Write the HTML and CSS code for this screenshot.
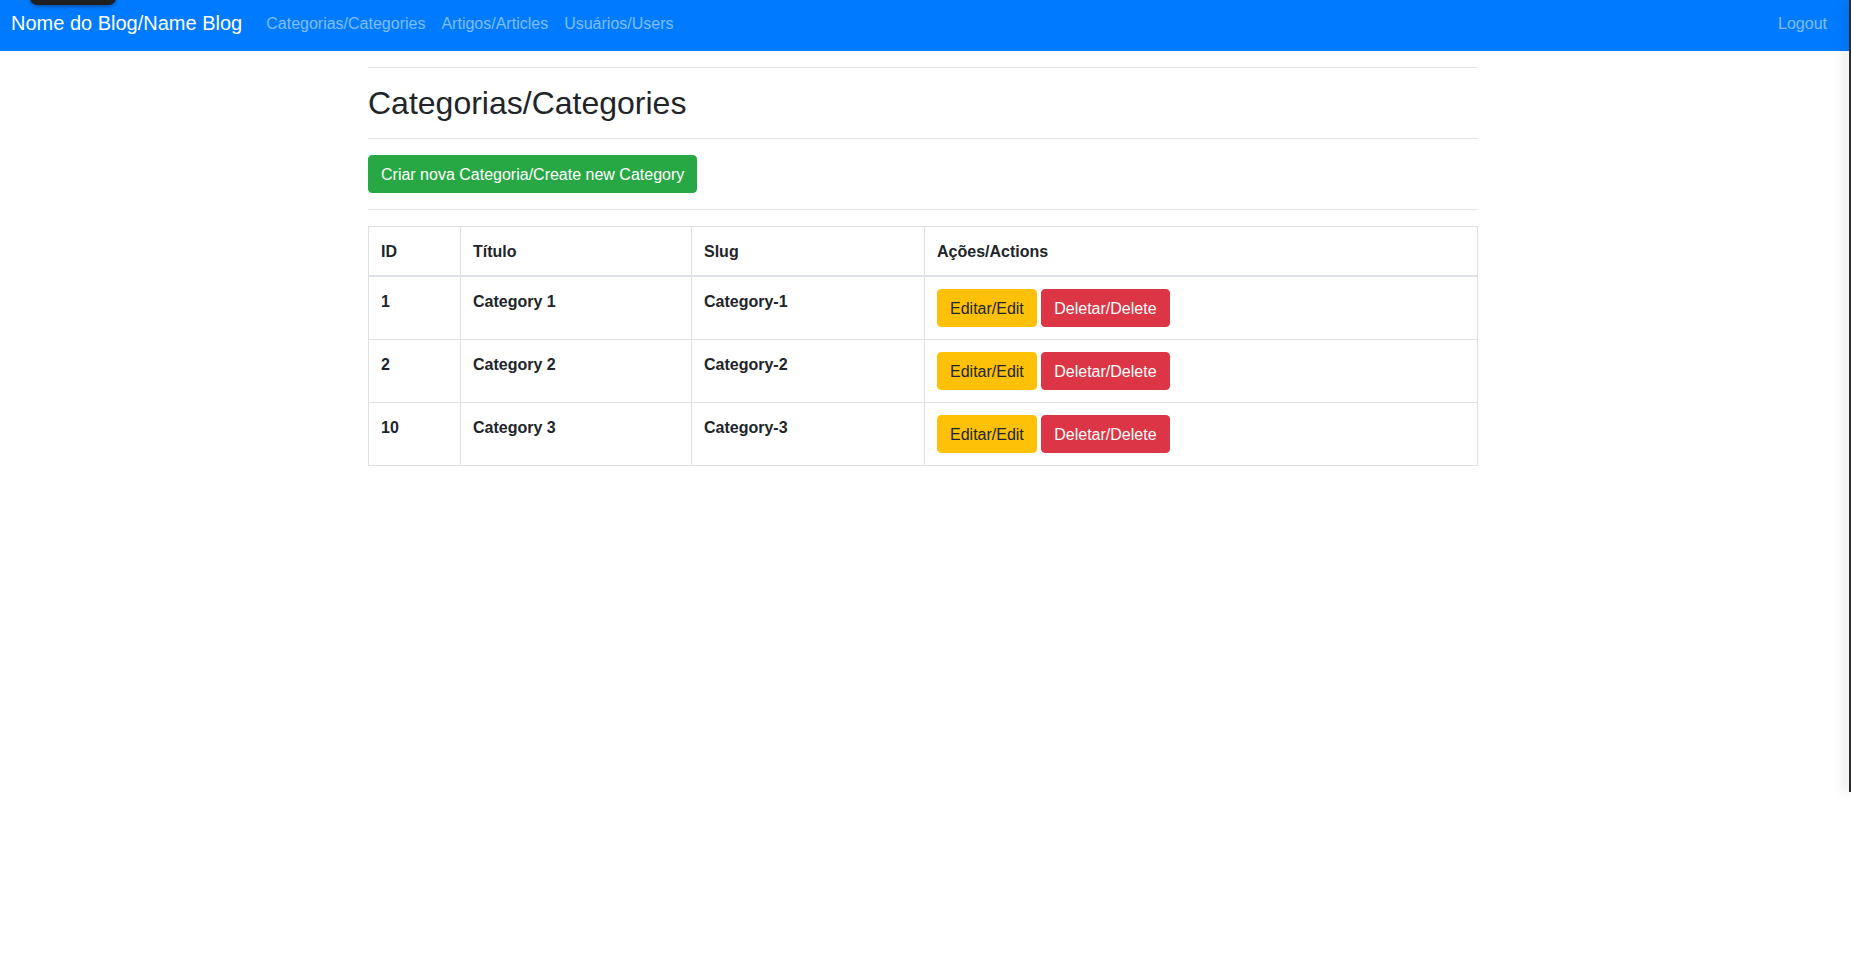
FILE: index.html
```html
<!DOCTYPE html>
<html lang="pt">
<head>
<meta charset="utf-8">
<title>Categorias/Categories</title>
<link rel="stylesheet" href="styles.css">
</head>
<body>
<nav class="navbar">
  <a class="brand" href="#">Nome do Blog/Name Blog</a>
  <a class="nav-link" href="#">Categorias/Categories</a>
  <a class="nav-link" href="#">Artigos/Articles</a>
  <a class="nav-link" href="#">Usuários/Users</a>
  <a class="nav-link logout" href="#">Logout</a>
</nav>
<div class="page">
  <main class="container">
    <hr class="rule">
    <h2 class="title">Categorias/Categories</h2>
    <hr class="rule">
    <a class="btn btn-success" href="#">Criar nova Categoria/Create new Category</a>
    <hr class="rule">
    <table class="table">
      <thead>
        <tr>
          <th class="col-id">ID</th>
          <th class="col-title">Título</th>
          <th class="col-slug">Slug</th>
          <th>Ações/Actions</th>
        </tr>
      </thead>
      <tbody>
        <tr>
          <th>1</th>
          <th>Category 1</th>
          <th>Category-1</th>
          <td><a class="btn btn-warning" href="#">Editar/Edit</a> <button class="btn btn-danger">Deletar/Delete</button></td>
        </tr>
        <tr>
          <th>2</th>
          <th>Category 2</th>
          <th>Category-2</th>
          <td><a class="btn btn-warning" href="#">Editar/Edit</a> <button class="btn btn-danger">Deletar/Delete</button></td>
        </tr>
        <tr>
          <th>10</th>
          <th>Category 3</th>
          <th>Category-3</th>
          <td><a class="btn btn-warning" href="#">Editar/Edit</a> <button class="btn btn-danger">Deletar/Delete</button></td>
        </tr>
      </tbody>
    </table>
  </main>
</div>
<div class="overlay-tab"></div>
<div class="overlay-edge"></div>
</body>
</html>
```

FILE: styles.css
```css
html, body {
  margin: 0;
  padding: 0;
}
body {
  font-family: "Liberation Sans", Arial, Helvetica, sans-serif;
  font-size: 16px;
  line-height: 1.5;
  color: #212529;
  background: #fff;
  position: relative;
  min-height: 964px;
}
a { text-decoration: none; }

.navbar {
  display: flex;
  align-items: flex-start;
  height: 51px;
  box-sizing: border-box;
  padding: 8px 16px 0 11px;
  background: #007bff;
}
.brand {
  font-size: 20px;
  line-height: 30px;
  color: #fff;
  margin-right: 16px;
  white-space: nowrap;
}
.nav-link {
  font-size: 16px;
  line-height: 24px;
  margin-top: 4px;
  padding: 0 8px;
  color: rgba(255, 255, 255, 0.5);
  white-space: nowrap;
}
.logout { margin-left: auto; }

.page {
  padding-right: 5px;
}
.container {
  display: block;
  max-width: 1110px;
  margin: 0 auto;
}
.rule {
  margin: 16px 0;
  border: 0;
  border-top: 1px solid rgba(0, 0, 0, 0.1);
  height: 0;
}
.title {
  margin: 0 0 8px;
  font-size: 32px;
  font-weight: 500;
  line-height: 1.2;
}
.btn {
  display: inline-block;
  box-sizing: border-box;
  font-family: inherit;
  font-size: 16px;
  font-weight: 400;
  line-height: 24px;
  padding: 7px 12px 5px;
  border: 1px solid transparent;
  border-radius: 4px;
  vertical-align: top;
  cursor: pointer;
}
.btn-success { background: #28a745; border-color: #28a745; color: #fff; }
.btn-warning { background: #ffc107; border-color: #ffc107; color: #212529; }
.btn-danger { background: #dc3545; border-color: #dc3545; color: #fff; }

.table {
  width: 100%;
  border-collapse: collapse;
  border: 1px solid #dee2e6;
  margin-bottom: 16px;
}
.table th, .table td {
  padding: 13px 12px 11px;
  border: 1px solid #dee2e6;
  text-align: left;
  vertical-align: top;
  font-weight: 700;
}
.table td {
  padding-top: 12px;
  padding-bottom: 12px;
}
.table thead th {
  border-bottom: 2px solid #dee2e6;
}
.col-id { width: 67px; }
.col-title { width: 206px; }
.col-slug { width: 208px; }

.overlay-tab {
  position: absolute;
  top: -10px;
  left: 30px;
  width: 86px;
  height: 15px;
  border-radius: 8px;
  background: #1f1f1f;
  box-shadow: 0 1px 4px rgba(0, 0, 0, 0.45);
}
.overlay-edge {
  position: absolute;
  top: 0;
  right: 0;
  width: 2px;
  height: 792px;
  background: #2b2b2b;
  box-shadow: -3px 0 12px rgba(0, 0, 0, 0.35);
}
```
